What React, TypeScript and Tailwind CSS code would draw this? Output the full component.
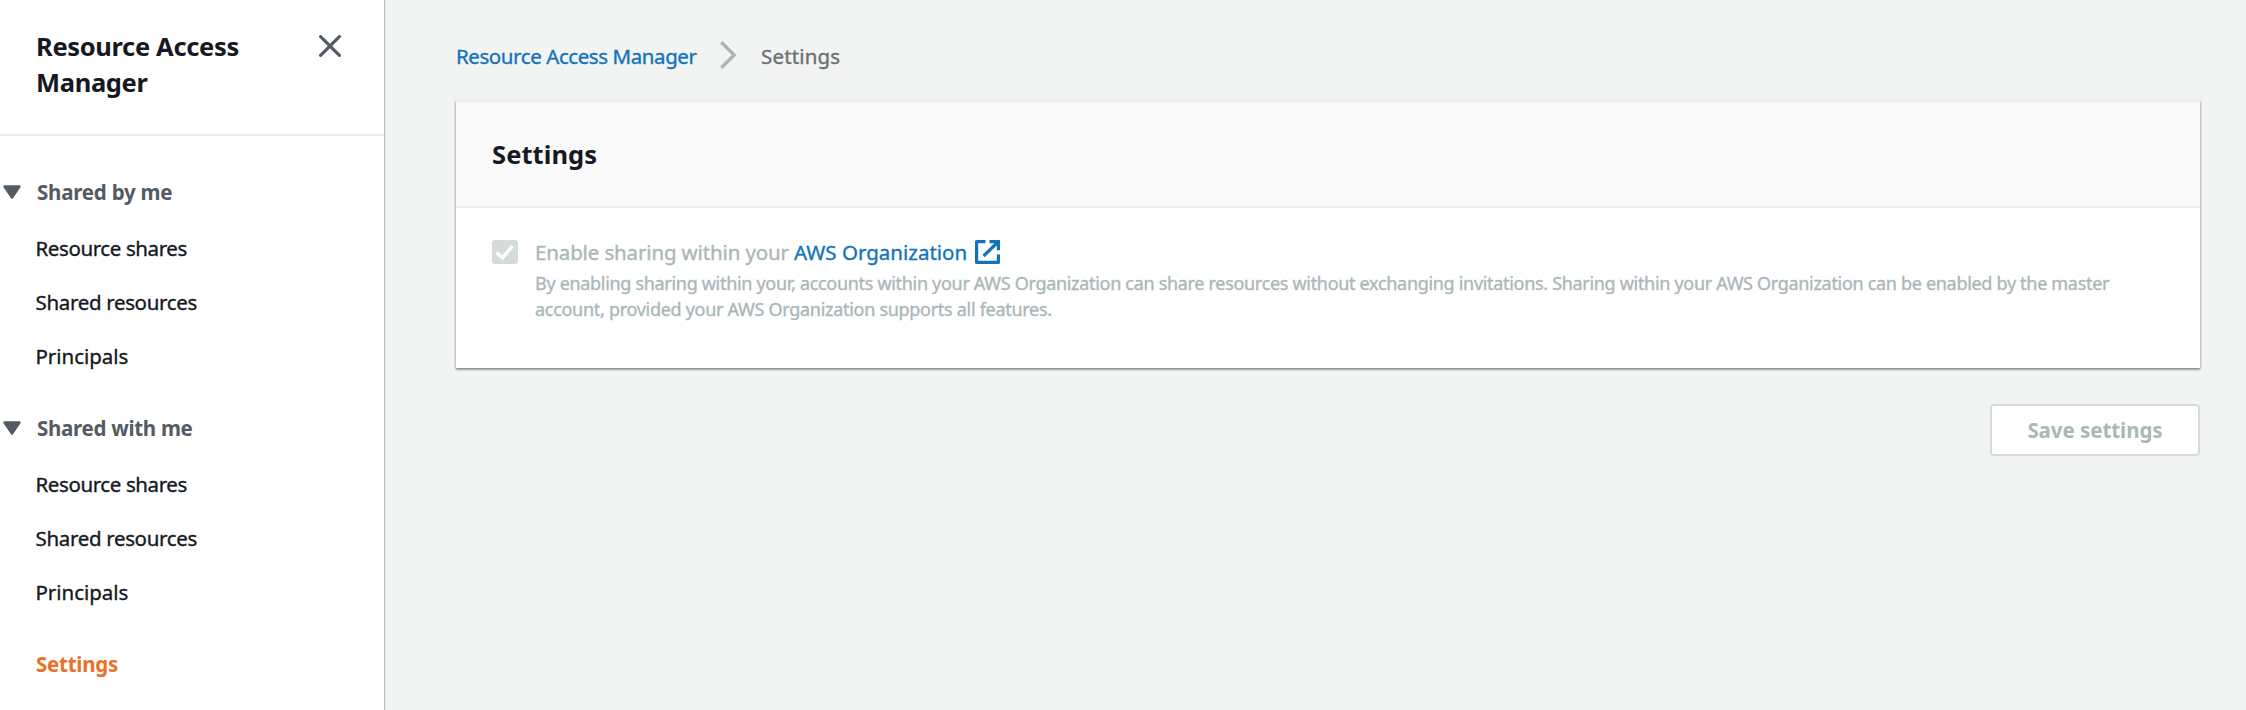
type NavItem = { label: string; spacing: string };
type NavSection = { title: string; spacing: string; items: NavItem[] };

const items: NavItem[] = [
  { label: "Resource shares", spacing: "tracking-[-0.4px]" },
  { label: "Shared resources", spacing: "tracking-[-0.33px]" },
  { label: "Principals", spacing: "tracking-[-0.04px]" },
];

const sections: NavSection[] = [
  { title: "Shared by me", spacing: "tracking-[-0.22px]", items },
  { title: "Shared with me", spacing: "tracking-[-0.29px]", items },
];

function Section({ title, spacing, items }: NavSection) {
  return (
    <section className="mb-[18px]">
      <h3 className={`mb-0.5 flex h-[54px] items-center pl-[3px] font-bold text-[#545b64] ${spacing}`}>
        <svg className="mr-4 h-[14px] w-[18px]" viewBox="0 0 18 14">
          <path d="M1.5 1.5h15L9 12.5z" fill="#545b64" stroke="#545b64" strokeWidth="2.4" strokeLinejoin="round" />
        </svg>
        {title}
      </h3>
      <ul className="[-webkit-text-stroke:0.35px]">
        {items.map((item) => (
          <li key={item.label} className={`pl-[35.5px] leading-[54px] ${item.spacing}`}>
            <a>{item.label}</a>
          </li>
        ))}
      </ul>
    </section>
  );
}

function Sidebar() {
  return (
    <aside className="z-10 w-96 shrink-0 bg-white shadow-[1px_0_0_#b8c1c5,2px_0_1px_rgba(0,28,36,0.06)]">
      <header className="flex h-[136px] items-start justify-between border-b-2 border-[#eaeded] pt-7 pr-[43px] pl-9">
        <h2 className="w-[230px] text-[25.5px] leading-9 font-bold tracking-[-0.34px]">Resource Access Manager</h2>
        <svg className="mt-[7px] h-[22px] w-[22px]" viewBox="0 0 22 22" fill="none" stroke="#545b64" strokeWidth="3.2" strokeLinecap="round">
          <path d="M1.6 1.6l18.8 18.8M20.4 1.6L1.6 20.4" />
        </svg>
      </header>
      <nav className="pt-[29px]">
        {sections.map((s) => (
          <Section key={s.title} {...s} />
        ))}
        <a className="block pl-9 leading-[54px] font-bold tracking-[-0.24px] text-[#eb7126]">Settings</a>
      </nav>
    </aside>
  );
}

function Breadcrumbs() {
  return (
    <div className="flex h-[28px] items-center [-webkit-text-stroke:0.35px]">
      <a className="w-[264px] tracking-[-0.42px] text-[#1273bb]">Resource Access Manager</a>
      <svg className="mr-6 -mt-0.5 h-7 w-[17px]" viewBox="0 0 17 28" fill="none" stroke="#aab7b8" strokeWidth="3.4">
        <path d="M1.3 1.3L14.2 14 1.3 26.7" />
      </svg>
      <span className="tracking-[0.17px] text-[#6c7071]">Settings</span>
    </div>
  );
}

export default function App() {
  return (
    <div className="flex h-[710px] overflow-hidden bg-[#f2f3f3] font-['Noto_Sans',sans-serif] text-[20.5px] text-[#16191f]">
      <Sidebar />
      <main className="flex grow flex-col pt-[42px] pr-[46px] pl-[72px]">
        <Breadcrumbs />
        <div className="mt-[30px] h-[268px] border-t-2 border-[#eaeded] bg-white shadow-[0_2px_2px_0_rgba(0,28,36,0.3),1px_1px_2px_0_rgba(0,28,36,0.15),-1px_1px_2px_0_rgba(0,28,36,0.15)]">
          <header className="h-[106px] border-b-2 border-[#eaeded] bg-[#fafafa] px-9">
            <h1 className="text-[25.5px] leading-[104px] font-bold tracking-[0.08px]">Settings</h1>
          </header>
          <div className="flex pt-8 pl-9">
            <svg className="mr-[17px] h-6 w-[26px] shrink-0" viewBox="0 0 26 24">
              <rect width="26" height="24" rx="3" fill="#d5dbdb" />
              <path d="M4.4 12.6l6.1 5.2L20.6 5.8" fill="none" stroke="#fff" strokeWidth="3.6" />
            </svg>
            <div className="w-[1600px] text-[#aab7b8] [-webkit-text-stroke:0.35px]">
              <div className="flex h-6 items-center whitespace-pre">
                <span className="w-[259px] tracking-[-0.14px]">Enable sharing within your</span>
                <a className="w-[181px] text-[#1273bb]">AWS Organization</a>
                <svg className="h-6 w-[25px]" viewBox="0 0 25 24" fill="none" stroke="#1273bb" strokeWidth="3.2">
                  <path d="M10.5 1.6H1.6v20.8h21.8V14.5" strokeLinejoin="round" />
                  <path d="M14.5 1.6h8.9v8.6M23 2L8.6 16" />
                </svg>
              </div>
              <p className="mt-[6px] text-[18px] leading-[26px] tracking-[-0.309px]">
                By enabling sharing within your, accounts within your AWS Organization can share resources without exchanging
                invitations. Sharing within your AWS Organization can be enabled by the master
                <br />
                <span className="tracking-[-0.29px]">account, provided your AWS Organization supports all features.</span>
              </p>
            </div>
          </div>
        </div>
        <button className="mt-9 flex h-[52px] w-[210px] items-center justify-center self-end rounded-[4px] border-2 border-[#d5dbdb] bg-white font-bold tracking-[-0.05px] text-[#aab7b8]">
          Save settings
        </button>
      </main>
    </div>
  );
}
